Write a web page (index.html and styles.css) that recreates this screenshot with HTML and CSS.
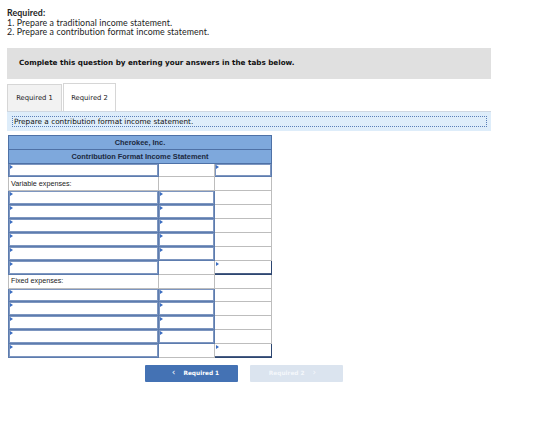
FILE: index.html
```html
<!DOCTYPE html>
<html>
<head>
<meta charset="utf-8">
<link rel="stylesheet" href="styles.css">
</head>
<body>
<div class="page">
  <div class="req">
    <div class="req-title">Required:</div>
    <div>1. Prepare a traditional income statement.</div>
    <div>2. Prepare a contribution format income statement.</div>
  </div>
  <div class="note">Complete this question by entering your answers in the tabs below.</div>
  <div class="tabs">
    <div class="tab">Required 1</div>
    <div class="tab active">Required 2</div>
  </div>
  <div class="panel"><div class="prompt">Prepare a contribution format income statement.</div></div>
  <table class="stmt">
    <colgroup><col class="c1"><col class="c2"><col class="c3"></colgroup>
    <tr class="hd"><th colspan="3">Cherokee, Inc.</th></tr>
    <tr class="hd"><th colspan="3">Contribution Format Income Statement</th></tr>
    <tr><td class="in"></td><td></td><td class="in"></td></tr>
    <tr><td class="lbl">Variable expenses:</td><td></td><td></td></tr>
    <tr><td class="in"></td><td class="in"></td><td></td></tr>
    <tr><td class="in"></td><td class="in"></td><td></td></tr>
    <tr><td class="in"></td><td class="in"></td><td></td></tr>
    <tr><td class="in"></td><td class="in"></td><td></td></tr>
    <tr><td class="in"></td><td class="in"></td><td></td></tr>
    <tr><td class="in"></td><td></td><td class="in tot"></td></tr>
    <tr><td class="lbl">Fixed expenses:</td><td></td><td></td></tr>
    <tr><td class="in"></td><td class="in"></td><td></td></tr>
    <tr><td class="in"></td><td class="in"></td><td></td></tr>
    <tr><td class="in"></td><td class="in"></td><td></td></tr>
    <tr><td class="in"></td><td class="in"></td><td></td></tr>
    <tr><td class="in"></td><td></td><td class="in tot"></td></tr>
  </table>
  <div class="nav">
    <div class="btn prev"><span class="chev">&lsaquo;</span>Required 1</div>
    <div class="btn next">Required 2<span class="chev">&rsaquo;</span></div>
  </div>
</div>
</body>
</html>
```
FILE: styles.css
```css
html, body { margin: 0; padding: 0; background: #fff; }
.page { padding: 8px 0 0 7px; width: 484px; }
.req { font-family: Lato, "Open Sans", sans-serif; font-size: 8.8px; line-height: 9.5px; color: #222; letter-spacing: 0.1px; }
.req-title { font-weight: bold; }
.note {
  margin-top: 11px; background: #e0e0e0; height: 31px; box-sizing: border-box;
  padding: 10px 0 0 12px;
  font-family: "DejaVu Sans", Verdana, sans-serif; font-weight: bold; font-size: 7.2px; color: #111;
}
.tabs { display: flex; margin-top: 4px; height: 28px; align-items: flex-end; }
.tab {
  box-sizing: border-box; height: 27px; padding: 9px 0 0 0; width: 55px; text-align: center;
  background: #f2f2f2; border: 1px solid #d6d6d6; border-bottom: none;
  font-family: "DejaVu Sans", Verdana, sans-serif; font-size: 6.8px; color: #222;
}
.tab.active { background: #fff; height: 28px; width: 53px; margin-left: 1px; padding-top: 10px; }
.panel {
  background: #deedfa; border-top: 1px solid #cfd8e2; height: 20px; box-sizing: border-box;
  padding: 4px 4px 0 5px;
}
.prompt {
  border: 1px dotted #5a7fb8; height: 11px; box-sizing: border-box; padding: 0 0 0 1px;
  font-family: "DejaVu Sans", Verdana, sans-serif; font-size: 7.3px; line-height: 10px; color: #111;
}
.stmt { margin: 4px 0 0 1px; border-collapse: collapse; table-layout: fixed; width: 263px;
  font-family: "Liberation Sans", Arial, sans-serif; }
.c1 { width: 150px; } .c2 { width: 56px; } .c3 { width: 57px; }
.stmt th { background: #7ea8dc; border: 1px solid #4e71a6; font-size: 7.4px; font-weight: bold; color: #1b2840; padding: 0; height: 13px; line-height: 13px; }
.stmt td { border: 1px solid #bdbdbd; padding: 0; height: 12.9px; line-height: 12px; position: relative; font-size: 7.2px; color: #222; }
.stmt td.lbl { padding-left: 2px; }
.stmt td.in { border-color: #5d7cae; box-shadow: inset 0 0 0 1px #7d96c0; }
.stmt td.in::before {
  content: ""; position: absolute; left: 1px; top: 1px;
  border-left: 3px solid #3a6cc0; border-top: 2px solid transparent; border-bottom: 2px solid transparent;
}
.stmt td.tot { border-color: #2d4670; box-shadow: inset 0 -1px 0 0 #4a5f85; }
.nav { display: flex; gap: 12px; padding-left: 138px; margin-top: 7px; }
.btn {
  width: 93px; height: 17px; box-sizing: border-box; display: flex; align-items: center; justify-content: center;
  font-family: "DejaVu Sans", Verdana, sans-serif; font-weight: bold; font-size: 5.8px; color: #fff; border-radius: 1px;
}
.btn.prev { background: #4472b4; }
.btn.next { background: #dbe4ef; color: #f4f7fb; }
.chev { font-size: 9px; font-weight: normal; margin: 0 8px; line-height: 1; position: relative; top: -1px; }
```
